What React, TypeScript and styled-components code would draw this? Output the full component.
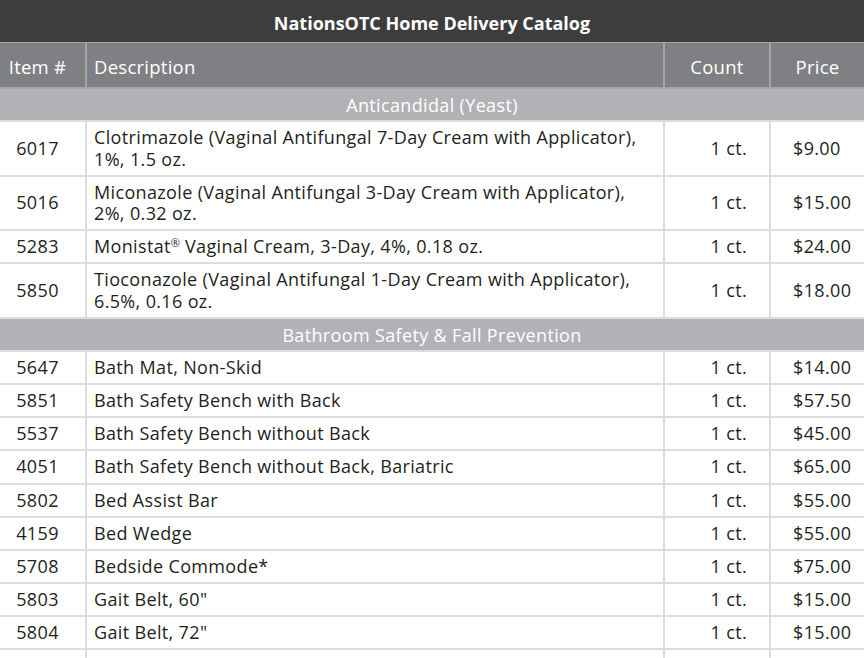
import React from 'react';
import styled, { createGlobalStyle } from 'styled-components';

type Item = { id: string; desc: string[]; count: string; price: string };
type Section = { title: string; items: Item[] };

const sections: Section[] = [
  {
    title: 'Anticandidal (Yeast)',
    items: [
      { id: '6017', desc: ['Clotrimazole (Vaginal Antifungal 7-Day Cream with Applicator),', '1%, 1.5 oz.'], count: '1 ct.', price: '$9.00' },
      { id: '5016', desc: ['Miconazole (Vaginal Antifungal 3-Day Cream with Applicator),', '2%, 0.32 oz.'], count: '1 ct.', price: '$15.00' },
      { id: '5283', desc: ['Monistat® Vaginal Cream, 3-Day, 4%, 0.18 oz.'], count: '1 ct.', price: '$24.00' },
      { id: '5850', desc: ['Tioconazole (Vaginal Antifungal 1-Day Cream with Applicator),', '6.5%, 0.16 oz.'], count: '1 ct.', price: '$18.00' },
    ],
  },
  {
    title: 'Bathroom Safety & Fall Prevention',
    items: [
      { id: '5647', desc: ['Bath Mat, Non-Skid'], count: '1 ct.', price: '$14.00' },
      { id: '5851', desc: ['Bath Safety Bench with Back'], count: '1 ct.', price: '$57.50' },
      { id: '5537', desc: ['Bath Safety Bench without Back'], count: '1 ct.', price: '$45.00' },
      { id: '4051', desc: ['Bath Safety Bench without Back, Bariatric'], count: '1 ct.', price: '$65.00' },
      { id: '5802', desc: ['Bed Assist Bar'], count: '1 ct.', price: '$55.00' },
      { id: '4159', desc: ['Bed Wedge'], count: '1 ct.', price: '$55.00' },
      { id: '5708', desc: ['Bedside Commode*'], count: '1 ct.', price: '$75.00' },
      { id: '5803', desc: ['Gait Belt, 60"'], count: '1 ct.', price: '$15.00' },
      { id: '5804', desc: ['Gait Belt, 72"'], count: '1 ct.', price: '$15.00' },
      { id: '5805', desc: ['Grab Bar, 12"'], count: '1 ct.', price: '$15.00' },
    ],
  },
];

const Global = createGlobalStyle`
  html, body { margin: 0; padding: 0; background: #fff; overflow: hidden; }
  body { font-family: "Open Sans", "Noto Sans", sans-serif; color: #231f20; }
`;

const Page = styled.div`
  width: 864px;
  height: 658px;
  overflow: hidden;
`;

const Title = styled.div`
  height: 42px;
  background: #3d3d3d;
  color: #fff;
  font-weight: 700;
  font-size: 18px;
  display: flex;
  align-items: center;
  justify-content: center;
  padding-top: 3px;
  box-sizing: border-box;
`;

const Table = styled.table`
  width: 864px;
  border-collapse: collapse;
  table-layout: fixed;
`;

const Head = styled.th<{ $align?: string }>`
  height: 41px;
  padding: 3px 0 0;
  background: #7f8083;
  color: #fff;
  font-weight: 400;
  font-size: 18.5px;
  letter-spacing: 0.25px;
  text-align: ${(p) => p.$align || 'center'};
  border-top: 1px solid #a4a5a8;
  border-left: 2px solid #a4a5a8;
  border-bottom: 2px solid #a4a5a8;
  &:first-child { border-left: none; padding-right: 10px; }
  &.desc { padding-left: 7px; }
`;

const CategoryCell = styled.td`
  padding: 6px 0 4px;
  line-height: 21px;
  background: #b1b2b5;
  color: #fff;
  font-size: 18px;
  letter-spacing: 0.35px;
  text-align: center;
  border-bottom: 2px solid #dcdcdc;
`;

const Cell = styled.td<{ $kind: 'id' | 'desc' | 'count' | 'price' }>`
  padding: 5px 0 4.5px;
  font-size: 18px;
  letter-spacing: 0.35px;
  line-height: 21.6px;
  border-bottom: 2px solid #dcdcdc;
  border-left: 2px solid #dcdcdc;
  vertical-align: middle;
  white-space: nowrap;
  &:first-child { border-left: none; }
  ${(p) =>
    p.$kind === 'id'
      ? 'text-align: center; padding-right: 10px;'
      : p.$kind === 'desc'
      ? 'text-align: left; padding-left: 7px;'
      : p.$kind === 'count'
      ? 'text-align: right; padding-right: 22px;'
      : 'text-align: left; padding-left: 22px;'}
`;

const Reg = styled.sup`
  font-size: 11px;
  line-height: 0;
  vertical-align: 6px;
  letter-spacing: 0;
`;

function DescLine({ text }: { text: string }) {
  const parts = text.split('®');
  return (
    <div>
      {parts.map((p, i) => (
        <React.Fragment key={i}>
          {i > 0 && <Reg>®</Reg>}
          {p}
        </React.Fragment>
      ))}
    </div>
  );
}

export default function App() {
  return (
    <Page>
      <Global />
      <Title>NationsOTC Home Delivery Catalog</Title>
      <Table>
        <colgroup>
          <col style={{ width: 86 }} />
          <col style={{ width: 578 }} />
          <col style={{ width: 106 }} />
          <col style={{ width: 94 }} />
        </colgroup>
        <thead>
          <tr>
            <Head>Item #</Head>
            <Head className="desc" $align="left">Description</Head>
            <Head>Count</Head>
            <Head>Price</Head>
          </tr>
        </thead>
        <tbody>
          {sections.map((s) => (
            <React.Fragment key={s.title}>
              <tr>
                <CategoryCell colSpan={4}>{s.title}</CategoryCell>
              </tr>
              {s.items.map((it) => (
                <tr key={it.id}>
                  <Cell $kind="id">{it.id}</Cell>
                  <Cell $kind="desc">
                    {it.desc.map((line, i) => (
                      <DescLine key={i} text={line} />
                    ))}
                  </Cell>
                  <Cell $kind="count">{it.count}</Cell>
                  <Cell $kind="price">{it.price}</Cell>
                </tr>
              ))}
            </React.Fragment>
          ))}
        </tbody>
      </Table>
    </Page>
  );
}
